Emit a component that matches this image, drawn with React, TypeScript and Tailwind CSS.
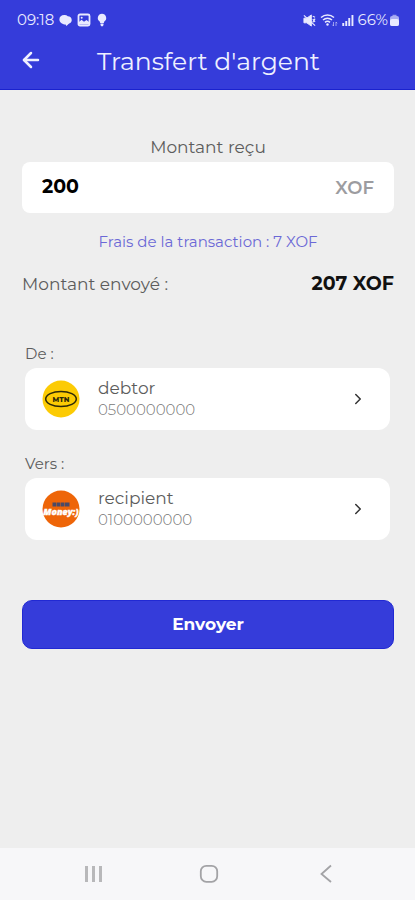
import { ArrowLeft, ChevronRight } from "lucide-react";

const accounts = [
  { id: "from", label: "De :", name: "debtor", phone: "0500000000", Logo: MtnLogo },
  { id: "to", label: "Vers :", name: "recipient", phone: "0100000000", Logo: OrangeLogo },
];

function MtnLogo() {
  return (
    <svg viewBox="0 0 38 38" className="size-[38px] shrink-0" role="img" aria-label="MTN">
      <circle cx="19" cy="19" r="18.5" fill="#fccb04" />
      <ellipse cx="19" cy="19" rx="15.3" ry="7.6" fill="none" stroke="#2e2a08" strokeWidth="1.5" />
      <text x="19" y="21.5" textAnchor="middle" fontSize="7" fontWeight="800" fill="#2e2a08">MTN</text>
    </svg>
  );
}

function OrangeLogo() {
  return (
    <svg viewBox="0 0 38 38" className="size-[38px] shrink-0" role="img" aria-label="Orange Money">
      <circle cx="19" cy="19" r="18.5" fill="#ee6508" />
      <path d="M10.500 12.500h3.500v4h-3.500ZM14.500 12.500h3.500v4h-3.500ZM18.500 12.500h3.500v4h-3.500ZM22.500 12.500h5v4h-5Z" fill="#4b4a66" />
      <text x="19" y="24.500" textAnchor="middle" fontSize="9" fontWeight="800" fontStyle="italic" fill="#fff" stroke="#fff" strokeWidth="0.400" className="font-['Open_Sans',sans-serif]">Money:)</text>
    </svg>
  );
}

function StatusBar() {
  return (
    <div className="flex h-10 items-center justify-between pl-[17px] pr-4 text-[15px] text-[#e9eaff]">
      <div className="flex items-center gap-[5px]">
        <span>09:18</span>
        <svg viewBox="0 0 14 14" className="size-[13px]" fill="currentColor">
          <path d="M5.500 1.200a5 5 0 0 1 4 1.300c2.500 0 4.200 1.800 4.200 4 0 1.500-.6 2.500-1.600 3.200-1 .6-1.700.8-2.400 1.600L8 13l-.9-1.600c-1 0-1.900 0-2.800-.5C2 9.800.4 8 .4 5.800c0-2.600 2.300-4.600 5.100-4.600Z" />
        </svg>
        <svg viewBox="0 0 14 14" className="size-[14px]">
          <rect x="1.500" y="1.500" width="11" height="11" rx="1.500" fill="none" stroke="currentColor" strokeWidth="1.800" />
          <path d="M2 11.500V9l2.500-2.200 2.500 2L9.500 7 12 9v2.500Z" fill="currentColor" />
          <circle cx="4.700" cy="4.700" r="1" fill="currentColor" />
        </svg>
        <svg viewBox="0 0 12 14" className="h-[14px] w-3" fill="currentColor">
          <path d="M6 .8a4.200 4.200 0 0 1 2.300 7.700l-.5 1.500H4.200l-.5-1.500A4.200 4.200 0 0 1 6 .8ZM4.500 10.500h3V12L6.800 13.200H5.200L4.500 12Z" />
        </svg>
      </div>
      <div className="flex items-center gap-1">
        <svg viewBox="0 0 14 14" className="size-[13px]" fill="none" stroke="currentColor">
          <path d="M1 4.500h3l5-3.500v12L4 9.500H1Z" fill="currentColor" />
          <path d="M1 1.500 13 12.500" strokeWidth="1.300" />
          <path d="m10.500 5.500 2.500 3M13 5l-2.500 4M10.500 2.500l2.500 1" strokeWidth="1.200" />
        </svg>
        <svg viewBox="0 0 18 14" className="h-[14px] w-[18px]" fill="none" stroke="currentColor" strokeWidth="1.500">
          <path d="M1 4.500a10 10 0 0 1 13 0M3 7a7 7 0 0 1 9 0M5 9.400a3.700 3.700 0 0 1 5 0" />
          <circle cx="7.500" cy="11.500" r="1.200" fill="currentColor" stroke="none" />
          <path d="M13.500 9v4m0 0-1.200-1.300M16 13V9m0 0 1.200 1.300" strokeWidth="0.800" opacity=".7" />
        </svg>
        <svg viewBox="0 0 12 12" className="size-3" fill="currentColor">
          <path d="M.3 9h1.900v3H.3ZM3.300 7h1.900v5H3.300ZM6.300 4h1.900v8H6.300ZM9.500 1h1.900v11H9.500Z" />
        </svg>
        <div className="flex items-center gap-[2px]">
          <span>66%</span>
          <svg viewBox="0 0 9 12" className="h-3 w-[9px]" fill="currentColor">
            <path d="M2.500.8h4v1h-4Z" opacity=".7" />
            <rect y="2" width="9" height="10" rx="2" opacity=".65" />
            <rect y="5" width="9" height="7" rx="2" />
          </svg>
        </div>
      </div>
    </div>
  );
}

function NavBar() {
  return (
    <nav className="grid h-[52px] grid-cols-3 items-center bg-[#f7f7f9] pl-9 pr-8 text-[#a3a3a6]">
      <button type="button" aria-label="Applications récentes" className="flex justify-center">
        <svg viewBox="0 0 20 20" className="size-5" fill="none" stroke="currentColor" strokeWidth="3" opacity=".75">
          <path d="M2.500 2v16M9.500 2v16M16.500 2v16" />
        </svg>
      </button>
      <button type="button" aria-label="Accueil" className="flex justify-center">
        <svg viewBox="0 0 20 20" className="size-5" fill="none" stroke="currentColor" strokeWidth="1.800">
          <rect x="1.800" y="1.800" width="16.400" height="16" rx="5.500" />
        </svg>
      </button>
      <button type="button" aria-label="Retour système" className="flex justify-center">
        <svg viewBox="0 0 20 20" className="size-5" fill="none" stroke="currentColor" strokeWidth="1.800">
          <path d="m16 1.500-9.500 8.500 9.500 8" />
        </svg>
      </button>
    </nav>
  );
}

export default function App() {
  return (
    <div className="flex min-h-screen flex-col bg-[#eeeeee] font-['Montserrat','Inter',sans-serif] text-[#5c5c5c]">
      <header className="border-b border-[#1a22cf] bg-[#353cda] text-[#eef0ff]">
        <StatusBar />
        <div className="flex h-[49px] items-start px-[19px]">
          <button type="button" aria-label="Retour" className="pt-2">
            <ArrowLeft className="size-6" strokeWidth={2.5} />
          </button>
          <h1 className="flex-1 pr-[22px] text-center text-[25px] leading-[42px]">Transfert d'argent</h1>
        </div>
      </header>

      <main className="flex-1 pt-11 pr-[21px] pl-[22px]">
        <label htmlFor="amount" className="block pb-[2px] text-center text-[17px] leading-[26px]">Montant reçu</label>
        <div className="flex h-[51px] items-center rounded-lg bg-white px-5 text-[19px]">
          <input id="amount" type="text" inputMode="numeric" defaultValue="200" className="w-full min-w-0 flex-1 bg-transparent font-bold text-black outline-none" />
          <span className="text-lg font-semibold text-[#9c9ca0]">XOF</span>
        </div>
        <p className="mt-[19px] text-center text-[15px] leading-5 text-[#6b68d6]">Frais de la transaction : 7 XOF</p>
        <div className="mt-[18px] flex items-center justify-between text-[17px] leading-7">
          <span>Montant envoyé :</span>
          <span className="text-[19px] leading-7 font-bold text-[#111]">207 XOF</span>
        </div>

        <div className="mt-[45px] space-y-[23px] pr-1 pl-[3px]">
          {accounts.map(({ id, label, name, phone, Logo }) => (
            <div key={id}>
              <span id={id} className="block pb-[3px] text-[15px] leading-[22px]">{label}</span>
              <button type="button" aria-describedby={id} className="flex h-[62px] w-full items-center rounded-xl bg-white pr-[23px] pl-[17px] text-left">
                <Logo />
                <span className="ml-[18px] flex-1">
                  <span className="block text-[17px] leading-[22px]">{name}</span>
                  <span className="block text-[15px] leading-[22px] font-light text-[#777]">{phone}</span>
                </span>
                <ChevronRight className="size-[18px] text-[#333]" strokeWidth={2} />
              </button>
            </div>
          ))}
        </div>

        <button type="button" className="mt-[60px] h-[49px] w-full rounded-[10px] border border-[#2129d3] bg-[#353cda] text-[17px] font-bold text-white">
          Envoyer
        </button>
      </main>

      <NavBar />
    </div>
  );
}
